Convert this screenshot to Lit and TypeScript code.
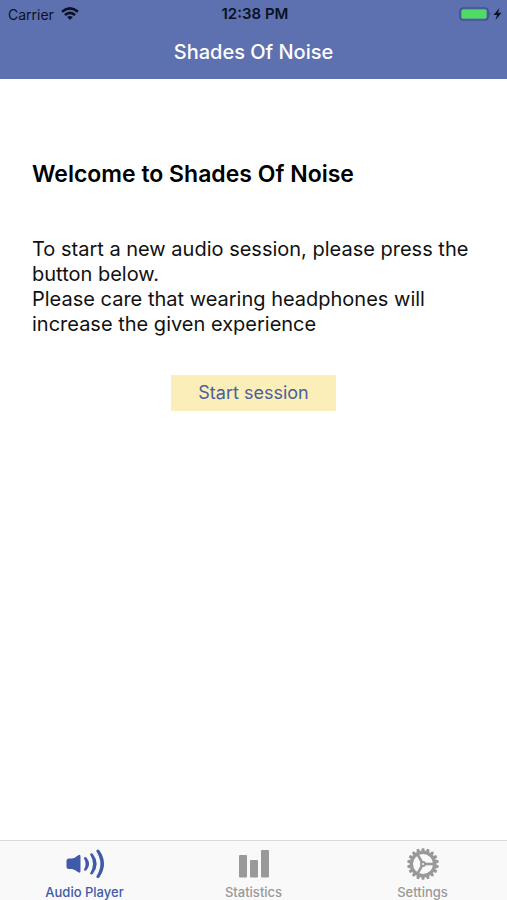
import { LitElement, html, css, svg } from "lit";
import { customElement, property, state } from "lit/decorators.js";
import { classMap } from "lit/directives/class-map.js";

type TabId = "player" | "statistics" | "settings";

const speakerIcon = svg`
  <svg viewBox="0 0 40 32" width="40" height="32" aria-hidden="true">
    <g fill="currentColor">
      <path d="M4 10.500H7Q9.500 10.300 13.300 7.200Q15.500 6 15.500 8.500V23Q15.500 25.500 13.300 24.300Q9.500 21.200 7 21H4Q1.500 21 1.500 18.500V13Q1.500 10.500 4 10.500Z"/>
      <path d="M18.800 9.900Q20.200 8 21.600 9.700Q26.600 15.800 21.600 22Q20.200 23.700 18.800 21.800Q22.400 15.800 18.800 9.900Z"/>
      <path d="M25 6.300Q26.400 4.300 27.900 6Q35.400 15.800 27.900 25.700Q26.400 27.400 25 25.400Q31 15.800 25 6.300Z"/>
      <path d="M31.200 2.900Q32.700 0.500 34.300 2.300Q43.800 15.800 34.300 29.400Q32.700 31.200 31.200 28.800Q39.600 15.800 31.200 2.900Z"/>
    </g>
  </svg>`;

const chartIcon = svg`
  <svg viewBox="0 0 40 32" width="40" height="32" aria-hidden="true">
    <g fill="currentColor">
      <rect x="5" y="7" width="8" height="22.500" rx="1"/>
      <rect x="16" y="12" width="8" height="17.500" rx="1"/>
      <rect x="27" y="2" width="8" height="27.500" rx="1"/>
    </g>
  </svg>`;

const toothAngles = Array.from({ length: 18 }, (_, i) => i * 20);

const gearIcon = svg`
  <svg viewBox="-20 -16 40 32" width="40" height="32" aria-hidden="true">
    <circle r="11.600" fill="none" stroke="currentColor" stroke-width="3.200"/>
    <g fill="currentColor">
      ${toothAngles.map((a) => svg`<path transform="rotate(${a})" d="M-2 -12.500L-1.200 -15.800H1.200L2 -12.500Z"/>`)}
    </g>
    <circle r="2" fill="none" stroke="currentColor" stroke-width="2"/>
    <g stroke="currentColor" stroke-width="2.600">
      ${[0, 120, 240].map((a) => svg`<path transform="rotate(${a})" d="M2 0H11"/>`)}
    </g>
  </svg>`;

@customElement("status-bar")
export class StatusBar extends LitElement {
  static styles = css`
    :host {
      display: grid;
      grid-template-columns: 1fr auto 1fr;
      align-items: center;
      height: 28px;
      padding: 0 5px 0 8px;
      color: #0c1022;
    }
    .carrier, .power { display: flex; align-items: center; }
    .carrier { gap: 7px; font-size: 14px; }
    .time { font-size: 15px; line-height: 18px; font-weight: 600; }
    .power { justify-content: flex-end; gap: 2px; }
    svg { display: block; }
  `;

  render() {
    return html`
      <div class="carrier">
        <span>Carrier</span>
        <svg viewBox="0 0 18 14" width="18" height="14" aria-hidden="true">
          <g fill="none" stroke="currentColor" stroke-width="2.600">
            <path d="M1 4.700Q9 -1.800 17 4.700"/>
            <path d="M3.900 8Q9 3.700 14.100 8"/>
          </g>
          <path fill="currentColor" d="M6.200 10Q9 7.800 11.800 10L9 13Z"/>
        </svg>
      </div>
      <time class="time">12:38 PM</time>
      <div class="power">
        <svg viewBox="0 0 32 14" width="32" height="14" aria-hidden="true">
          <rect x="1" y="1" width="28" height="12" rx="3" fill="none" stroke="#394a86" stroke-width="1.200"/>
          <rect x="2.500" y="2.500" width="25" height="9" rx="1.500" fill="#4fdc64"/>
          <path d="M30.300 5Q32.300 7 30.300 9Z" fill="#394a86"/>
        </svg>
        <svg viewBox="0 0 9 12" width="9" height="12" aria-hidden="true">
          <path fill="currentColor" d="M6.500 0L0.500 7H4L2.500 12L8.500 4.800H5Z"/>
        </svg>
      </div>
    `;
  }
}

@customElement("tab-bar")
export class TabBar extends LitElement {
  @property() selected: TabId = "player";

  static styles = css`
    :host {
      display: block;
      background: #f9f9f9;
      border-top: 1px solid #d9d9db;
    }
    .tabs { display: grid; grid-template-columns: repeat(3, 1fr); }
    .tab {
      display: flex;
      flex-direction: column;
      align-items: center;
      gap: 4px;
      height: 59px;
      padding: 7px 0 0;
      border: 0;
      background: none;
      color: #999;
      font: 500 13px/16px Inter, "Liberation Sans", sans-serif;
      cursor: pointer;
    }
    .active { color: #3f5aa9; }
    svg { display: block; flex: none; }
  `;

  private tabs: { id: TabId; label: string; icon: unknown }[] = [
    { id: "player", label: "Audio Player", icon: speakerIcon },
    { id: "statistics", label: "Statistics", icon: chartIcon },
    { id: "settings", label: "Settings", icon: gearIcon },
  ];

  private choose(id: TabId) {
    this.dispatchEvent(new CustomEvent("tab-change", { detail: id }));
  }

  render() {
    return html`
      <nav class="tabs">
        ${this.tabs.map(
          (t) => html`
            <button
              type="button"
              class=${classMap({ tab: true, active: t.id === this.selected })}
              aria-current=${t.id === this.selected ? "page" : "false"}
              @click=${() => this.choose(t.id)}
            >
              ${t.icon}<span>${t.label}</span>
            </button>
          `
        )}
      </nav>
    `;
  }
}

@customElement("app-root")
export class AppRoot extends LitElement {
  @state() private tab: TabId = "player";

  static styles = css`
    :host {
      display: flex;
      flex-direction: column;
      min-height: 100vh;
      background: #fff;
      color: #111;
      font-family: Inter, "Liberation Sans", sans-serif;
    }
    .top { background: #5d71b0; }
    .title {
      margin: 0;
      padding: 10px 0 13px;
      color: #fff;
      font-size: 20px;
      line-height: 28px;
      font-weight: 500;
      text-align: center;
    }
    .content {
      flex: 1;
      display: flex;
      flex-direction: column;
      padding: 80px 32px 32px;
    }
    .heading {
      margin: 0 0 48px;
      color: #000;
      font-size: 23px;
      line-height: 30px;
      font-weight: 600;
    }
    .copy { margin: 0; font-size: 20px; line-height: 25px; }
    .start {
      align-self: center;
      margin-top: 38px;
      padding: 0 27px;
      height: 36px;
      border: 0;
      background: #fbeeb8;
      color: #4a5f9f;
      font: 400 18px/36px Inter, "Liberation Sans", sans-serif;
      cursor: pointer;
    }
  `;

  render() {
    return html`
      <header class="top">
        <status-bar></status-bar>
        <h1 class="title">Shades Of Noise</h1>
      </header>
      <main class="content">
        <h2 class="heading">Welcome to Shades Of Noise</h2>
        <p class="copy">To start a new audio session, please press the button below.</p>
        <p class="copy">Please care that wearing headphones will increase the given experience</p>
        <button type="button" class="start">Start session</button>
      </main>
      <tab-bar
        .selected=${this.tab}
        @tab-change=${(e: CustomEvent<TabId>) => (this.tab = e.detail)}
      ></tab-bar>
    `;
  }
}
